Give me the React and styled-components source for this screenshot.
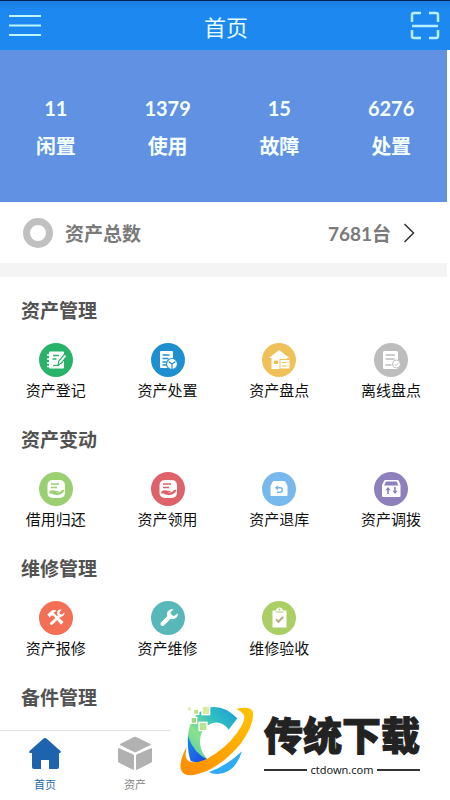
import React from "react";
import styled, { createGlobalStyle } from "styled-components";

const GlobalStyle = createGlobalStyle`
  * { box-sizing: border-box; }
  body {
    margin: 0;
    background: #fff;
    font-family: "Noto Sans CJK SC", sans-serif;
  }
  button { font: inherit; color: inherit; background: none; border: 0; padding: 0; cursor: pointer; }
  a { color: inherit; text-decoration: none; }
  h1, h2, p, dl, dd { margin: 0; }
  svg { display: block; }
`;

const Page = styled.div`
  position: relative;
  display: flex;
  flex-direction: column;
  min-height: 100vh;
`;

const Header = styled.header`
  display: flex;
  align-items: center;
  justify-content: space-between;
  height: 50px;
  padding: 0 10px 0 8px;
  border-top: 1px solid #08245c;
  background: linear-gradient(#1b7de0, #1d88f0 8px);
  color: #e8fdff;
`;

const Title = styled.h1`
  font-size: 22px;
  line-height: 32px;
  font-weight: 400;
`;

const Main = styled.main`
  flex: 1;
  margin-right: 3px;
`;

const Stats = styled.dl`
  display: grid;
  grid-template-columns: repeat(4, 1fr);
  height: 152px;
  padding-top: 42px;
  background: #6191e3;
  color: #f4ffff;
  text-align: center;
  font-size: 20px;
  font-weight: 700;
`;

const Stat = styled.div`
  display: flex;
  flex-direction: column-reverse;
  justify-content: flex-end;
  gap: 6px;
  line-height: 32px;
`;

const StatValue = styled.dd`
  font-family: Lato, sans-serif;
`;

const TotalRow = styled.a`
  display: flex;
  align-items: center;
  height: 61px;
  padding: 0 32px 0 23px;
  color: #7a7a7a;
  font-size: 19px;
  font-weight: 700;
`;

const Ring = styled.span`
  width: 30px;
  height: 30px;
  margin-right: 12px;
  border: 7px solid #c0c0c0;
  border-radius: 50%;
`;

const Total = styled.span`
  margin-left: auto;
  margin-right: 12px;
  font-family: Lato, "Noto Sans CJK SC", sans-serif;
`;

const Divider = styled.div`
  height: 14px;
  margin-bottom: 18px;
  background: #f4f4f4;
`;

const Section = styled.section`
  min-height: 129px;
`;

const LastSection = styled(Section)`
  min-height: 0;
`;

const Heading = styled.h2`
  padding-left: 21px;
  color: #525252;
  font-size: 19px;
  line-height: 30px;
  font-weight: 700;
`;

const Grid = styled.div`
  display: grid;
  grid-template-columns: repeat(4, 1fr);
  padding-top: 18px;
`;

const Item = styled.button`
  display: flex;
  flex-direction: column;
  align-items: center;
  gap: 2px;
  color: #111;
  font-size: 15px;
  line-height: 22px;
`;

const Badge = styled.span`
  width: 34px;
  height: 34px;
  border-radius: 50%;
  background: ${(p) => p.$color};
`;

const TabBar = styled.nav`
  display: grid;
  grid-template-columns: repeat(5, 1fr);
  height: 70px;
  border-top: 1px solid #e0e0e0;
`;

const Tab = styled.a`
  display: flex;
  flex-direction: column;
  align-items: center;
  gap: 4px;
  padding-top: 4px;
  color: ${(p) => (p.$active ? "#2a6da8" : "#858585")};
  font-size: 11px;
  line-height: 18px;
`;

const Brand = styled.aside`
  position: absolute;
  right: 0;
  bottom: 0;
  display: flex;
  align-items: center;
  gap: 10px;
  width: 280px;
  height: 98px;
  padding: 0 0 20px 10px;
  background: #fff;
  color: #222;
`;

const BrandText = styled.div`
  width: 156px;
`;

const BrandName = styled.p`
  font-size: 39px;
  line-height: 58px;
  font-weight: 900;
  white-space: nowrap;
  -webkit-text-stroke: 1px #222;
`;

const BrandSite = styled.p`
  display: flex;
  align-items: center;
  gap: 3px;
  font-family: "Noto Sans", sans-serif;
  font-size: 11px;
  line-height: 16px;
  &::before, &::after {
    content: "";
    flex: 1;
    height: 2px;
    background: #333;
  }
`;

const glyphs = {
  register: (c) => (
    <>
      <path fill="#fff" d="M11 8.500h13q1 0 1 1v15q0 1-1 1H11q-1 0-1-1v-15q0-1 1-1z" />
      <path stroke="#fff" strokeWidth="1.500" d="M8 12h3M8 16h3M8 20h3M8 23.500h3" />
      <path stroke={c} strokeWidth="1.300" d="M14 12.500h6M13.500 16h4" />
      <path fill="#fff" stroke={c} strokeWidth="1.200" d="M19 22l.8-4 5.700-7 2.500 2-5.700 7.200z" />
      <path stroke={c} strokeWidth="1.200" d="M14 22.500h6" />
    </>
  ),
  dispose: (c) => (
    <>
      <rect x="9" y="8" width="13" height="17" rx="1" fill="#fff" />
      <path stroke={c} strokeWidth="1.300" d="M11.500 12h7M11.500 15.500h6M11.500 19h4M11.500 22h4" />
      <circle cx="21" cy="21" r="5.500" fill="#fff" stroke={c} strokeWidth="1.200" />
      <path fill="none" stroke={c} strokeWidth="1.200" d="M17.500 18.500L21 21l3.500-2.500M21 21v5" />
    </>
  ),
  house: (c) => (
    <>
      <path fill="#fff" d="M17 7l10.500 8H25v11H9.500V15H7z" />
      <rect x="12" y="17.500" width="4" height="3.500" fill={c} />
      <rect x="18" y="16.500" width="10" height="9.500" fill="#fff" stroke={c} />
      <path stroke={c} strokeWidth="1.100" strokeDasharray="5 1 2 0" d="M19.500 19.500h7M19.500 23h7" />
    </>
  ),
  offline: (c) => (
    <>
      <rect x="9" y="8" width="15" height="18" rx="1.500" fill="#fff" />
      <path stroke={c} strokeWidth="1.300" d="M11.500 12h9.500M11.500 16h9M11.500 22h6" />
      <circle cx="22.500" cy="21" r="4" fill="#fff" stroke={c} />
      <path fill="none" stroke={c} d="M20.500 21l1.500 1.500 3-3" />
    </>
  ),
  hand: (c) => (
    <>
      <rect x="8.500" y="8" width="17.500" height="18" rx="5" fill="#fff" />
      <path stroke={c} strokeWidth="1.500" d="M12 12h8M12 15.500h6" />
      <path fill={c} d="M11 18.800q3-1.300 5.500 0l3 .3q1 1-1 1.500l-2 .2q3 .5 5-1.300 2.200-2.400 3.800-1.500.6.700-1.600 2.700-2.800 2.800-6.700 2.400-2.500-.4-4.500-1.500l-2.500 0z" />
    </>
  ),
  back: (c) => (
    <>
      <path fill="#fff" d="M12 9h10q1 0 1.500 1l2 4v9q0 1-1 1H9.500q-1 0-1-1v-9l2-4q.5-1 1.500-1z" />
      <path fill="none" stroke={c} strokeWidth="1.500" d="M15.800 14l-1.800 1.800 1.800 1.700M14 15.800h4.300q2 0 2 2.200t-2 2.200H15" />
    </>
  ),
  transfer: (c) => (
    <>
      <path fill="#fff" d="M11.500 8h12q1 0 1.400 1l1.600 4v11q0 1-1 1H9q-1 0-1-1V13l2-4q.5-1 1.500-1z" />
      <path fill={c} d="M12 9.500h10.500l2 4H10zM14 15l2.600 3.200h-1.800V22h-1.600v-3.800h-1.800zM21 22l-2.600-3.200h1.800V15h1.600v3.800h1.800z" />
    </>
  ),
  tools: () => (
    <>
      <path stroke="#fff" strokeWidth="3" strokeLinecap="round" d="M12.500 22.500l8.500-8" />
      <path fill="#fff" d="M25.300 11.200l-2.500 2.500-2-.6-.5-1.900 2.400-2.500c-3-.6-5 1.300-4.600 4.200.5 3 4.100 3.600 5.800 2.200 1.300-1 1.900-2.400 1.400-3.900z" />
      <path fill="#fff" d="M8.200 13.500l5-4.300q3-.5 4.500.8l-3 1.500 1.500 2 8.500 7.500-2.700 2.800-7.700-9.200-2 .2-1.500 2z" />
    </>
  ),
  wrench: () => (
    <>
      <path stroke="#fff" strokeWidth="4" strokeLinecap="round" d="M11.500 23l8-8" />
      <path fill="#fff" d="M26.700 12.300l-3.500 2.600-3-.8-.6-2.900 3-2.900c-3.900-.8-6.900 1.800-6.600 5.300.2 4 4.900 5.800 8 3.900 2.200-1.200 3.200-3.200 2.700-5.200z" />
    </>
  ),
  clipboard: (c) => (
    <>
      <path fill="#fff" d="M10.500 9.500H14q.5-3 3.500-3t3.500 3h3.500v17h-14z" />
      <circle cx="17.500" cy="8.500" r="0.900" fill={c} />
      <path stroke={c} d="M14 11h7" />
      <path fill="none" stroke="#b5b08c" strokeWidth="2" d="M14 18.200l2.500 2.500 4.700-5" />
    </>
  ),
};

const sections = [
  {
    title: "资产管理",
    items: [
      ["资产登记", "#29b26a", "register"],
      ["资产处置", "#208fd0", "dispose"],
      ["资产盘点", "#eec159", "house"],
      ["离线盘点", "#bdbdbd", "offline"],
    ],
  },
  {
    title: "资产变动",
    items: [
      ["借用归还", "#9bd072", "hand"],
      ["资产领用", "#dd6269", "hand"],
      ["资产退库", "#77b9ed", "back"],
      ["资产调拨", "#8d80bb", "transfer"],
    ],
  },
  {
    title: "维修管理",
    items: [
      ["资产报修", "#f36f56", "tools"],
      ["资产维修", "#58b8b9", "wrench"],
      ["维修验收", "#abcf65", "clipboard"],
    ],
  },
];

const stats = [
  ["闲置", 11],
  ["使用", 1379],
  ["故障", 15],
  ["处置", 6276],
];

const MenuIcon = () => (
  <svg width="34" height="24" viewBox="0 0 34 24" stroke="#bdf5ff" strokeWidth="2" aria-hidden="true">
    <path d="M1 2h32M1 11.500h32M1 21h32" />
  </svg>
);

const ScanIcon = () => (
  <svg width="30" height="30" viewBox="0 0 30 30" fill="none" stroke="#b9eeff" strokeWidth="2.500" aria-hidden="true">
    <path d="M2 11V4q0-2 2-2h7M19 2h7q2 0 2 2v7M28 19v6q0 2-2 2h-7M11 27H4q-2 0-2-2v-6M2 15h26" />
  </svg>
);

const ChevronIcon = () => (
  <svg width="12" height="20" viewBox="0 0 12 20" fill="none" stroke="#333" strokeWidth="1.500" aria-hidden="true">
    <path d="M1.500 1l9 9-9 9" />
  </svg>
);

const HomeIcon = () => (
  <svg width="34" height="36" viewBox="0 0 34 36" fill="#1d63ae" aria-hidden="true">
    <path d="M17 3q1 0 2 1l13.500 12q1 2-1 2H31v14q0 2-2 2h-8v-9h-8v9H6q-2 0-2-2V18H2.500q-2 0-1-2L15 4q1-1 2-1z" />
  </svg>
);

const CubeIcon = () => (
  <svg width="36" height="36" viewBox="0 0 36 36" fill="#b1b1b1" stroke="#b1b1b1" strokeLinejoin="round" aria-hidden="true">
    <path d="M18 2l15.500 7.500L18 17 3 9.500zM1.500 13.500l15 6.500v14.500l-15-7.500zM34.500 13.500l-15 6.500v14.500l15-7.500z" />
  </svg>
);

const BrandLogo = () => (
  <svg width="74" height="70" viewBox="540 75 222 210" role="img" aria-label="传统下载">
    <defs>
      <linearGradient id="arc" x1="1" y1="0" x2="0" y2="1">
        <stop offset="0" stopColor="#199dd5" />
        <stop offset=".35" stopColor="#30bfc2" />
        <stop offset=".65" stopColor="#8ae28c" />
        <stop offset="1" stopColor="#45c9ad" />
      </linearGradient>
      <linearGradient id="orbit" x1="1" y1="0" x2="0" y2="1">
        <stop offset="0" stopColor="#ffc400" />
        <stop offset="1" stopColor="#ff8b00" />
      </linearGradient>
      <linearGradient id="deep" x1="0" y1="0" x2="1" y2="1">
        <stop offset="0" stopColor="#168fed" />
        <stop offset="1" stopColor="#2041dd" />
      </linearGradient>
    </defs>
    <path fill="url(#arc)" d="M712 112L686 146Q666 119 638 126Q598 140 600 188Q604 218 626 237L590 248Q560 215 564 165Q568 100 625 80Q671 70 712 112z" />
    <path fill="url(#deep)" d="M564 165Q580 216 625 237Q595 250 572 240Q561 207 564 165z" />
    <path fill="#2faaf5" d="M726 211Q706 276 653 279Q637 280 627 273Q681 254 726 211z" />
    <path fill="url(#orbit)" d="M709 84Q745 74 758 90Q766 128 722 188Q657 264 591 280Q552 289 543 266Q537 239 560 197Q553 230 563 238Q579 252 622 233Q675 204 711 156Q742 113 730 99Q723 90 709 84z" />
    <g stroke="#fff" strokeWidth="4">
      <rect x="562" y="77" width="13" height="13" fill="#e4efac" />
      <rect x="581" y="85" width="15" height="15" fill="#badf7f" />
      <rect x="606" y="76" width="23" height="25" fill="#d9eca0" />
      <rect x="573" y="109" width="17" height="18" fill="#9ed979" />
      <rect x="597" y="124" width="24" height="25" fill="#b9e593" />
    </g>
  </svg>
);

export default function App() {
  return (
    <Page>
      <GlobalStyle />
      <Header>
        <button aria-label="菜单"><MenuIcon /></button>
        <Title>首页</Title>
        <button aria-label="扫一扫"><ScanIcon /></button>
      </Header>
      <Main>
        <Stats>
          {stats.map(([label, value]) => (
            <Stat key={label}>
              <dt>{label}</dt>
              <StatValue>{value}</StatValue>
            </Stat>
          ))}
        </Stats>
        <TotalRow href="#total">
          <Ring />
          <span>资产总数</span>
          <Total>7681台</Total>
          <ChevronIcon />
        </TotalRow>
        <Divider />
        {sections.map((section) => (
          <Section key={section.title}>
            <Heading>{section.title}</Heading>
            <Grid>
              {section.items.map(([label, color, icon]) => (
                <Item key={label}>
                  <Badge $color={color}>
                    <svg width="34" height="34" viewBox="0 0 34 34" aria-hidden="true">
                      {glyphs[icon](color)}
                    </svg>
                  </Badge>
                  {label}
                </Item>
              ))}
            </Grid>
          </Section>
        ))}
        <LastSection>
          <Heading>备件管理</Heading>
        </LastSection>
      </Main>
      <TabBar>
        <Tab href="#home" $active><HomeIcon />首页</Tab>
        <Tab href="#assets"><CubeIcon />资产</Tab>
      </TabBar>
      <Brand>
        <BrandLogo />
        <BrandText>
          <BrandName>传统下载</BrandName>
          <BrandSite>ctdown.com</BrandSite>
        </BrandText>
      </Brand>
    </Page>
  );
}
